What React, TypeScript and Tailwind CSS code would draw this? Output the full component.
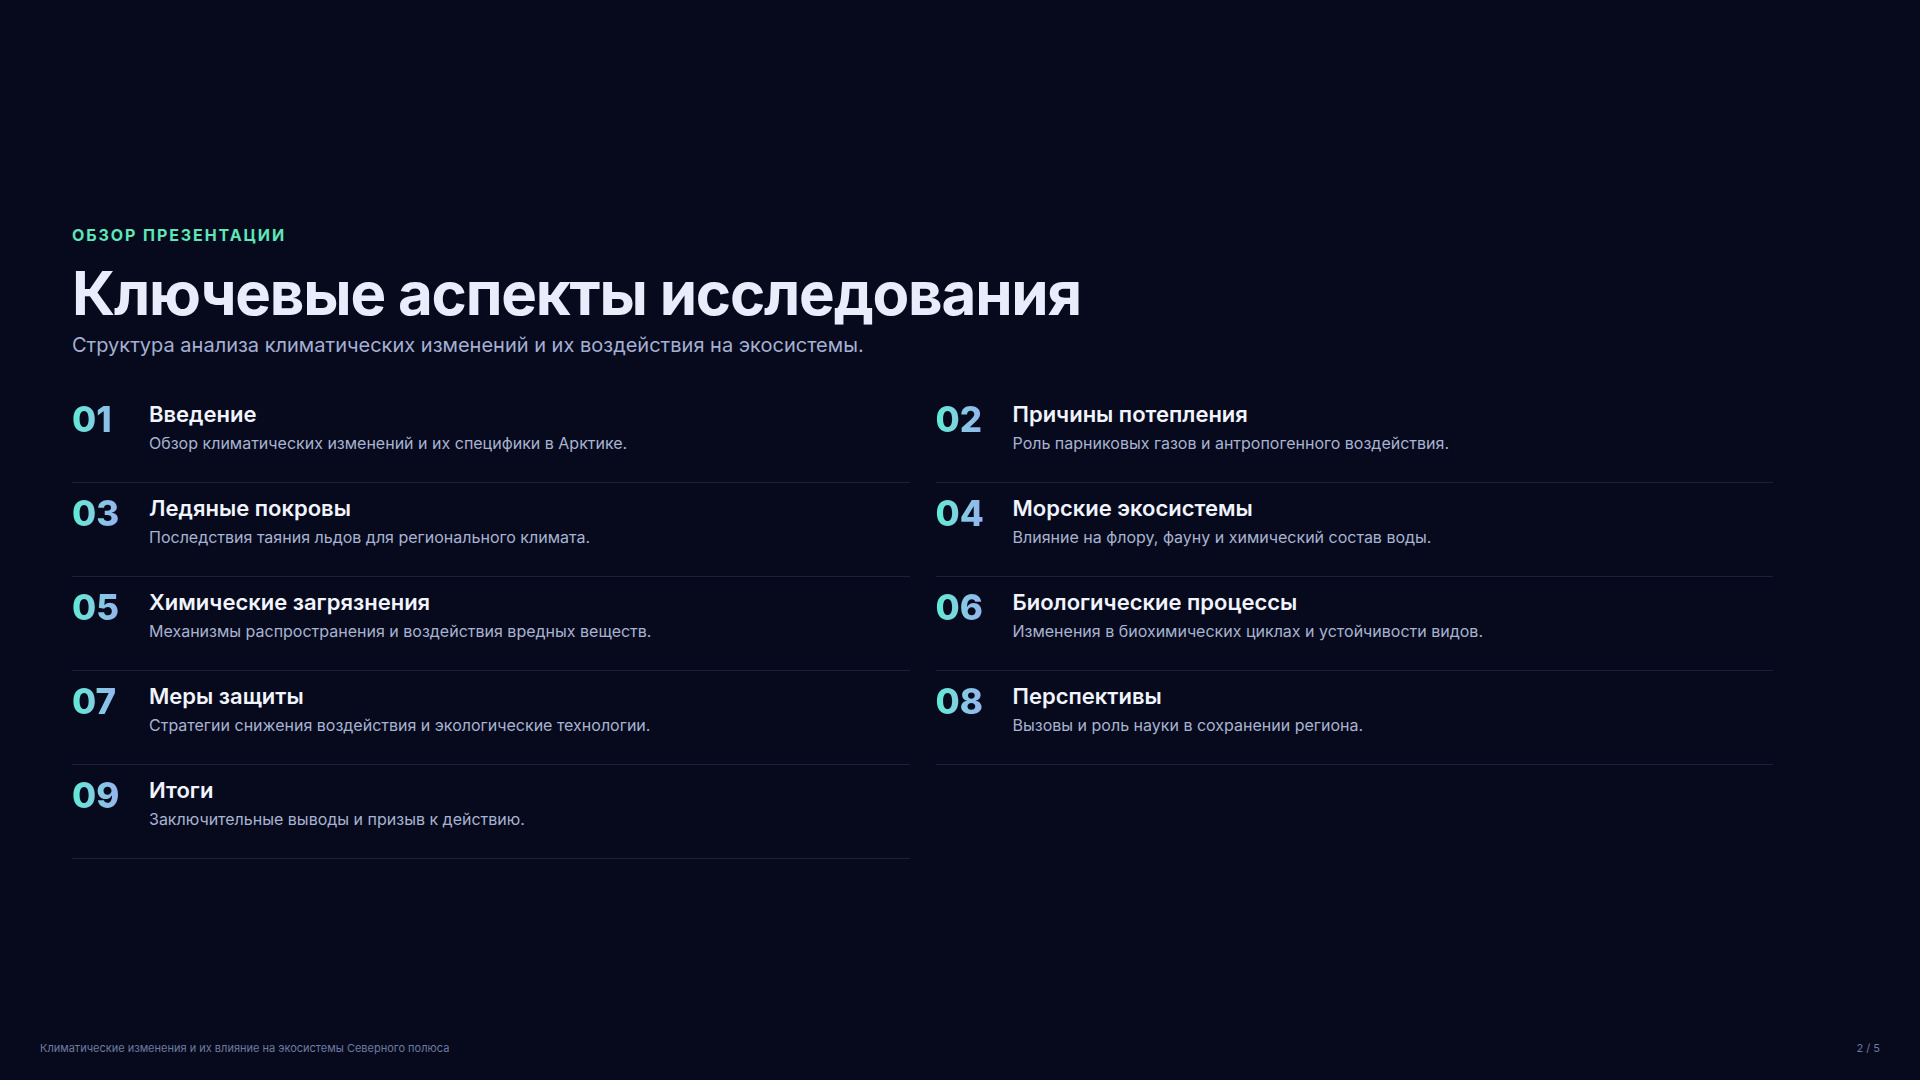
const items = [
  ["01", "Введение", "Обзор климатических изменений и их специфики в Арктике."],
  ["02", "Причины потепления", "Роль парниковых газов и антропогенного воздействия."],
  ["03", "Ледяные покровы", "Последствия таяния льдов для регионального климата."],
  ["04", "Морские экосистемы", "Влияние на флору, фауну и химический состав воды."],
  ["05", "Химические загрязнения", "Механизмы распространения и воздействия вредных веществ."],
  ["06", "Биологические процессы", "Изменения в биохимических циклах и устойчивости видов."],
  ["07", "Меры защиты", "Стратегии снижения воздействия и экологические технологии."],
  ["08", "Перспективы", "Вызовы и роль науки в сохранении региона."],
  ["09", "Итоги", "Заключительные выводы и призыв к действию."],
];

export default function App() {
  return (
    <div className="w-[1920px] h-[1080px] bg-[#060a1c] relative overflow-hidden" style={{ fontFamily: "Inter, 'Noto Sans', sans-serif" }}>
      <div className="h-full flex flex-col justify-center pl-[72px] pr-[147px] pb-[4px] pt-[10px]">
        <div className="text-[16px] font-bold tracking-[0.12em] text-[#5ee6b8] leading-none">ОБЗОР ПРЕЗЕНТАЦИИ</div>
        <h1 className="mt-[14px] text-[60px] font-bold text-[#e8ecfb] tracking-[-0.02em] leading-[72px]">Ключевые аспекты исследования</h1>
        <p className="mt-[2px] text-[20px] text-[#a5b0d3] leading-[28px]">Структура анализа климатических изменений и их воздействия на экосистемы.</p>
        <div className="mt-[30px] grid grid-cols-2 gap-x-[26px]">
          {items.map(([n, t, d]) => (
            <div key={n} className="flex h-[94px] pt-[10px] border-b border-[#1c2236]">
              <div className="w-[77px] text-[35px] font-extrabold leading-[40px] bg-gradient-to-r from-[#5eead4] to-[#a78bfa] bg-clip-text text-transparent">{n}</div>
              <div>
                <div className="text-[22px] font-semibold text-[#f1f4fd] leading-[30px]">{t}</div>
                <div className="mt-[3px] text-[16px] text-[#a9b3d1] leading-[22px]">{d}</div>
              </div>
            </div>
          ))}
        </div>
      </div>
      <div className="absolute left-[40px] bottom-[24px] text-[11px] text-[#6f7aa0]">Климатические изменения и их влияние на экосистемы Северного полюса</div>
      <div className="absolute right-[40px] bottom-[24px] text-[11px] text-[#6f7aa0]">2 / 5</div>
    </div>
  );
}
